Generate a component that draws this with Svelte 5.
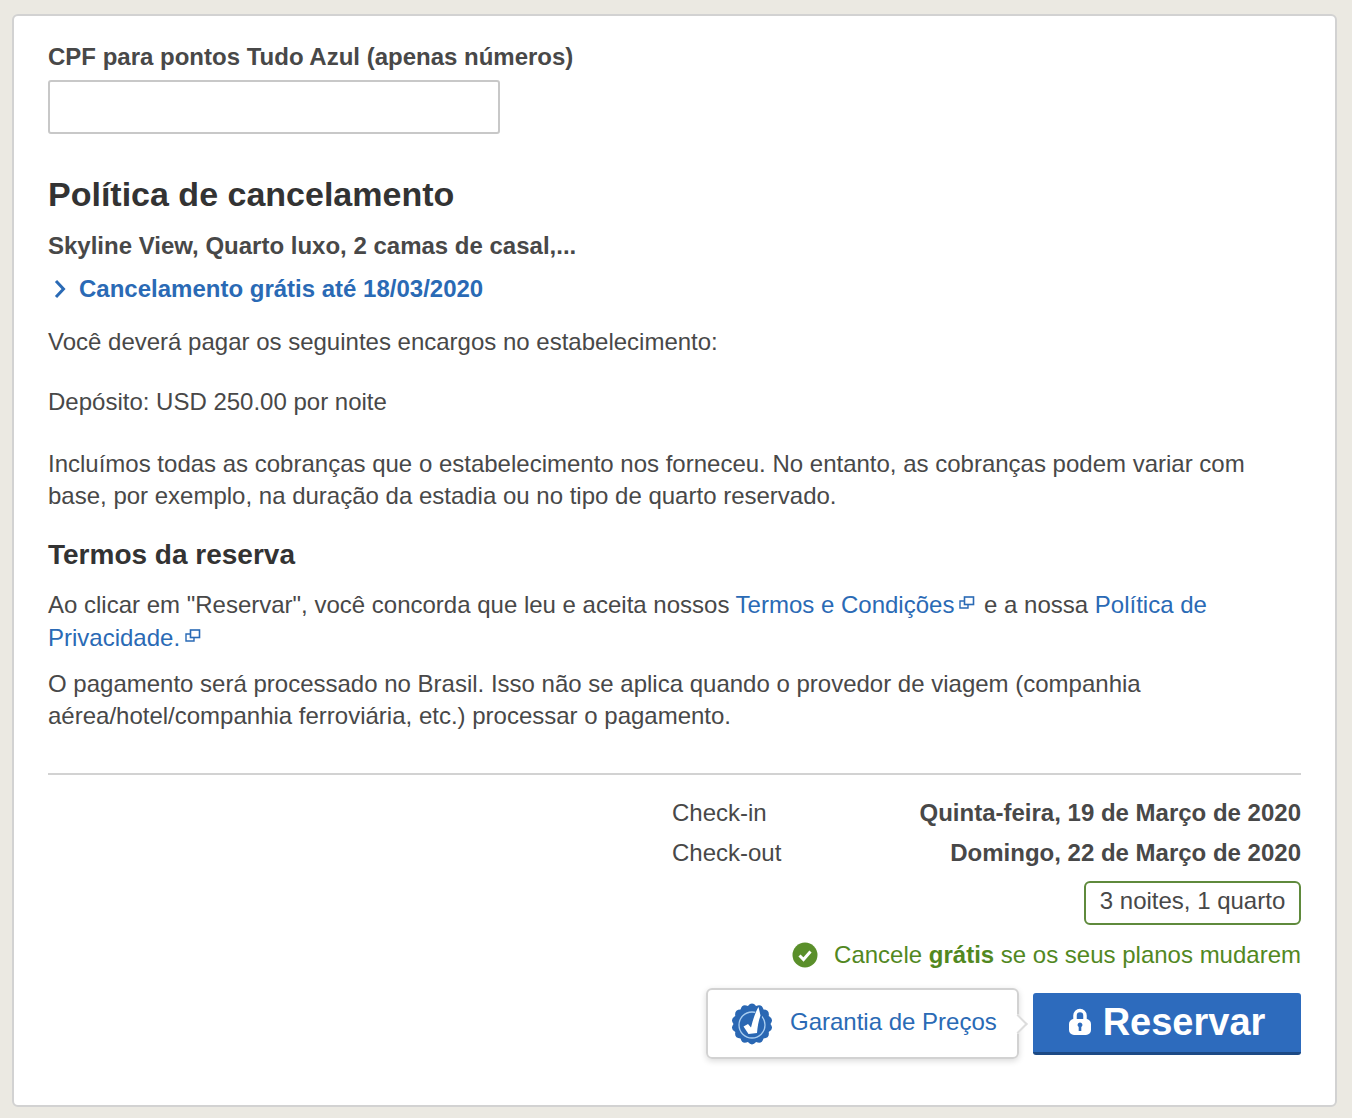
<script>
	const checkDates = [
		{ label: 'Check-in', value: 'Quinta-feira, 19 de Março de 2020' },
		{ label: 'Check-out', value: 'Domingo, 22 de Março de 2020' }
	];

	// scalloped edge of the price guarantee seal
	function sealPath(bumps, outer, inner) {
		let d = '';
		for (let i = 0; i < bumps; i++) {
			const a0 = (i / bumps) * Math.PI * 2;
			const a1 = ((i + 0.5) / bumps) * Math.PI * 2;
			const a2 = ((i + 1) / bumps) * Math.PI * 2;
			if (i === 0) d += `M${(22 + inner * Math.cos(a0)).toFixed(1)} ${(22 + inner * Math.sin(a0)).toFixed(1)}`;
			d += `Q${(22 + outer * 1.04 * Math.cos(a1)).toFixed(1)} ${(22 + outer * 1.04 * Math.sin(a1)).toFixed(1)} ${(22 + inner * Math.cos(a2)).toFixed(1)} ${(22 + inner * Math.sin(a2)).toFixed(1)}`;
		}
		return d + 'Z';
	}
</script>

{#snippet externalIcon()}
	<svg class="ext" width="16" height="14" viewBox="0 0 16 14" aria-hidden="true">
		<rect x="5.5" y="1" width="9" height="7.5" fill="none" stroke="#2a6ab5" stroke-width="1.6" />
		<path d="M5 5H1v7h8V9" fill="none" stroke="#2a6ab5" stroke-width="1.4" />
	</svg>
{/snippet}

<div class="card">
	<label class="field-label" for="cpf">CPF para pontos Tudo Azul (apenas números)</label>
	<input id="cpf" class="field" type="text" />

	<h2>Política de cancelamento</h2>
	<p class="room">Skyline View, Quarto luxo, 2 camas de casal,...</p>
	<a class="toggle" href="#cancel">
		<svg width="14" height="20" viewBox="0 0 14 20" aria-hidden="true">
			<path d="M3 2l7.500 8L3 18" fill="none" stroke="#2a6ab5" stroke-width="3" />
		</svg>
		Cancelamento grátis até 18/03/2020
	</a>
	<p class="charge">Você deverá pagar os seguintes encargos no estabelecimento:</p>
	<p class="deposit">Depósito: USD 250.00 por noite</p>
	<p class="included">Incluímos todas as cobranças que o estabelecimento nos forneceu. No entanto, as cobranças podem variar com base, por exemplo, na duração da estadia ou no tipo de quarto reservado.</p>

	<h3>Termos da reserva</h3>
	<p class="terms">Ao clicar em "Reservar", você concorda que leu e aceita nossos <a href="#terms">Termos e Condições</a>{@render externalIcon()} e a nossa <a href="#privacy">Política de Privacidade.</a>{@render externalIcon()}</p>
	<p class="processing">O pagamento será processado no Brasil. Isso não se aplica quando o provedor de viagem (companhia aérea/hotel/companhia ferroviária, etc.) processar o pagamento.</p>

	<div class="summary">
		<dl>
			{#each checkDates as row}
				<div class="date-row">
					<dt>{row.label}</dt>
					<dd>{row.value}</dd>
				</div>
			{/each}
		</dl>
		<div class="nights">3 noites, 1 quarto</div>
		<div class="free-cancel">
			<svg width="26" height="26" viewBox="0 0 26 26" aria-hidden="true">
				<circle cx="13" cy="13" r="12.500" fill="#5a8f2a" />
				<path d="M7.500 13.500l4 4 7-8" fill="none" stroke="#fff" stroke-width="3" />
			</svg>
			<span>Cancele <b>grátis</b> se os seus planos mudarem</span>
		</div>
		<div class="actions">
			<div class="guarantee">
				<svg width="44" height="44" viewBox="0 0 44 44" aria-hidden="true">
					<path fill="#2a67b3" d={sealPath(14, 22, 18.5)} />
					<circle cx="22" cy="23" r="13" fill="none" stroke="#a9cdf0" stroke-width="1.300" />
					<path fill="#2a67b3" d="M11.500 24.500L18 20l3 3.500C23 16 25.500 9 28.500 3.500l4 10C30 19 29 25 28.500 32.500L18 33.500Z" />
					<path fill="#fff" d="M13.500 24.500L18 22l3 3.500C23 17 25.500 10 28.500 5l2 8.500C28.500 19 27.500 25 27 31l-8.500 1Z" />
				</svg>
				<span>Garantia de Preços</span>
				<i class="pointer"></i>
			</div>
			<button type="button">
				<svg width="22" height="28" viewBox="0 0 22 28" aria-hidden="true">
					<path fill="none" stroke="#fff" stroke-width="3.500" d="M6 13V7.500a5 5 0 0 1 10 0V13" />
					<path fill="#fff" fill-rule="evenodd" d="M5 11h12a5 5 0 0 1 5 5v6a5 5 0 0 1-5 5H5a5 5 0 0 1-5-5v-6a5 5 0 0 1 5-5zm6 3.500a2.500 2.500 0 0 0-1.300 4.600V23h2.600v-3.900A2.500 2.500 0 0 0 11 14.500z" />
				</svg>
				Reservar
			</button>
		</div>
	</div>
</div>

<style>
	:global(body) {
		background: #ebe9e2;
		font-family: "Liberation Sans", Arial, sans-serif;
		color: #484848;
	}

	.card {
		box-sizing: border-box;
		width: 1325px;
		height: 1093px;
		margin: 14px 0 0 12px;
		padding: 26px 34px 0 34px;
		background: #fff;
		border: 2px solid #d2d2d2;
		border-radius: 6px;
		font-size: 24px;
		line-height: 32px;
	}

	.field-label {
		display: block;
		font-weight: 700;
		line-height: 30px;
	}

	.field {
		display: block;
		box-sizing: border-box;
		width: 452px;
		height: 54px;
		margin-top: 8px;
		background: #fff;
		border: 2px solid #c8c8c8;
		border-radius: 3px;
	}

	h2 {
		margin: 38px 0 0;
		font-size: 34px;
		line-height: 44px;
		color: #333;
	}

	h3 {
		margin: 25px 0 0;
		font-size: 28px;
		line-height: 36px;
		color: #333;
	}

	p {
		margin: 0;
	}

	.room {
		margin-top: 14px;
		font-weight: 700;
	}

	a {
		color: #2a6ab5;
		text-decoration: none;
	}

	.toggle {
		display: flex;
		align-items: center;
		gap: 12px;
		margin-top: 11px;
		font-weight: 700;
	}

	.toggle svg {
		margin-left: 5px;
	}

	.charge {
		margin-top: 21px;
	}

	.deposit {
		margin-top: 28px;
	}

	.included {
		margin-top: 30px;
	}

	.terms {
		margin-top: 15px;
		line-height: 33px;
	}

	.ext {
		margin: 0 2px 0 5px;
		vertical-align: 3px;
	}

	.processing {
		margin-top: 14px;
	}

	.summary {
		display: flex;
		flex-direction: column;
		align-items: flex-end;
		margin-top: 41px;
		padding-top: 22px;
		border-top: 2px solid #d2d2d2;
	}

	dl {
		width: 629px;
		margin: 0;
	}

	.date-row {
		display: flex;
		justify-content: space-between;
		height: 40px;
	}

	dd {
		margin: 0;
		font-weight: 700;
	}

	.nights {
		box-sizing: border-box;
		width: 217px;
		height: 44px;
		margin-top: 4px;
		padding: 2px 0;
		text-align: center;
		border: 2px solid #5f8a3c;
		border-radius: 6px;
	}

	.free-cancel {
		display: flex;
		align-items: center;
		gap: 16px;
		margin-top: 14px;
		color: #52881f;
	}

	.actions {
		display: flex;
		align-items: center;
		gap: 14px;
		margin-top: 17px;
	}

	.guarantee {
		position: relative;
		box-sizing: border-box;
		display: flex;
		align-items: center;
		gap: 16px;
		width: 313px;
		height: 71px;
		padding-left: 22px;
		border: 2px solid #d2d2d2;
		border-radius: 6px;
		box-shadow: 0 2px 6px rgba(0, 0, 0, 0.15);
		color: #2a6ab5;
	}

	.guarantee span {
		margin-top: -3px;
	}

	.pointer {
		position: absolute;
		top: 50%;
		right: -8px;
		width: 12px;
		height: 12px;
		background: #fff;
		border-top: 2px solid #ddd;
		border-right: 2px solid #ddd;
		transform: translateY(-50%) rotate(45deg);
	}

	button {
		display: flex;
		align-items: center;
		justify-content: center;
		gap: 12px;
		box-sizing: border-box;
		width: 268px;
		height: 62px;
		padding: 0;
		background: #2d6bbd;
		border: 0;
		border-bottom: 3px solid #1d4a85;
		border-radius: 3px;
		color: #fff;
		font: 700 38px "Liberation Sans", Arial, sans-serif;
	}
</style>
